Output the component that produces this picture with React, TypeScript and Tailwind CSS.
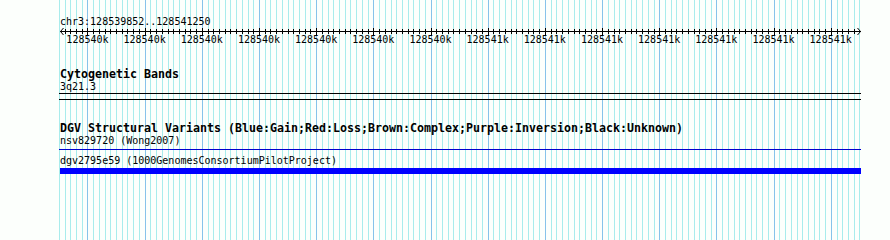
const START = 128539852;
const END = 128541250;
const SCALE = 800 / (END - START + 1);
const xOf = (bp: number) => 60 + (bp - START) * SCALE;

const gridBps: number[] = [];
for (let bp = 128539850; bp <= END; bp += 10) gridBps.push(bp);

const labels = [
  ...Array(7).fill('128540k'),
  ...Array(7).fill('128541k'),
];

const mono = "font-['DejaVu_Sans_Mono','Liberation_Mono',monospace] text-black";

const Grid = () => (
  <svg className="absolute inset-0" width={890} height={240} shapeRendering="crispEdges">
    {gridBps.map((bp) => (
      <rect
        key={bp}
        x={Math.round(xOf(bp))}
        y={0}
        width={1}
        height={240}
        fill={bp % 100 === 0 ? '#87c3ea' : '#a8ecec'}
      />
    ))}
  </svg>
);

const Ruler = () => (
  <svg width={890} height={7} className="block" shapeRendering="crispEdges">
    <rect x={60} y={3} width={801} height={1} fill="#000" />
    {gridBps
      .filter((bp) => bp > START && bp < END)
      .map((bp) => (
        <rect
          key={bp}
          x={Math.round(xOf(bp))}
          y={bp % 100 === 0 ? 0 : 1}
          width={1}
          height={bp % 100 === 0 ? 7 : 5}
          fill="#000"
        />
      ))}
    <polyline points="63.5,0 60.5,3.5 63.5,7" fill="none" stroke="#000" strokeWidth={1} shapeRendering="auto" />
    <polyline points="857.5,0 860.5,3.5 857.5,7" fill="none" stroke="#000" strokeWidth={1} shapeRendering="auto" />
  </svg>
);

export default function App() {
  return (
    <div className="relative w-[890px] h-[240px] overflow-hidden bg-[#fcfffc]">
      <Grid />
      <div className="relative flex flex-col">
        <div className={`${mono} mt-[15px] pl-[60px] text-[10px] leading-[13px]`}>
          chr3:128539852..128541250
        </div>
        <Ruler />
        <div className={`${mono} flex ml-[58.86px] text-[10px] leading-[10px]`}>
          {labels.map((l, i) => (
            <div key={i} className="w-[57.184px] shrink-0 text-center">
              {l}
            </div>
          ))}
        </div>

        <div className={`${mono} mt-[23px] pl-[60px] text-[11.63px] leading-[12px] font-bold`}>
          Cytogenetic Bands
        </div>
        <div className={`${mono} pl-[60px] text-[10px] leading-[13px]`}>3q21.3</div>
        <div className="ml-[59px] w-[802px] h-px bg-black" />
        <div className="ml-[59px] w-[802px] h-px bg-black mt-[5px]" />

        <div className={`${mono} mt-[22px] pl-[60px] text-[11.63px] leading-[12px] font-bold whitespace-nowrap`}>
          DGV Structural Variants (Blue:Gain;Red:Loss;Brown:Complex;Purple:Inversion;Black:Unknown)
        </div>
        <div className={`${mono} pl-[60px] text-[10px] leading-[13px]`}>nsv829720 (Wong2007)</div>
        <div className="ml-[59px] w-[802px] h-px bg-[#0000cd] mt-[2px]" />
        <div className={`${mono} mt-[4px] pl-[60px] text-[10px] leading-[13px]`}>
          dgv2795e59 (1000GenomesConsortiumPilotProject)
        </div>
        <div className="ml-[60px] w-[801px] h-[6px] bg-[#0000ff] mt-px" />
      </div>
    </div>
  );
}
